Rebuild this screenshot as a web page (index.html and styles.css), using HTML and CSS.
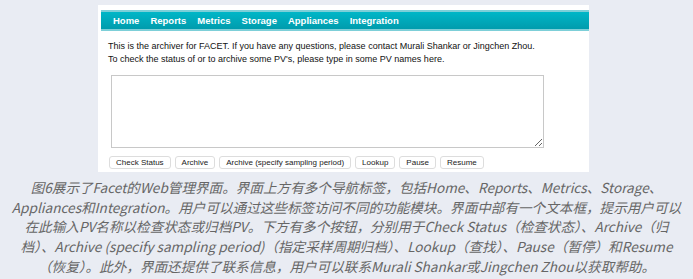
FILE: index.html
```html
<!DOCTYPE html>
<html lang="zh-CN">
<head>
    <meta charset="UTF-8">
    <title>Facet Archiver</title>
    <link rel="stylesheet" href="styles.css">
</head>
<body>

<div class="shot">
    <div class="nav">
        <a href="#">Home</a>
        <a href="#">Reports</a>
        <a href="#">Metrics</a>
        <a href="#">Storage</a>
        <a href="#">Appliances</a>
        <a href="#">Integration</a>
    </div>

    <div class="intro">
        <p>This is the archiver for FACET. If you have any questions, please contact Murali Shankar or Jingchen Zhou.</p>
        <p>To check the status of or to archive some PV's, please type in some PV names here.</p>
    </div>

    <textarea class="pvlist"></textarea>

    <div class="buttons">
        <button>Check Status</button>
        <button>Archive</button>
        <button>Archive (specify sampling period)</button>
        <button>Lookup</button>
        <button>Pause</button>
        <button>Resume</button>
    </div>
</div>

<p class="caption">
    图6展示了Facet的Web管理界面。界面上方有多个导航标签，包括Home、Reports、Metrics、Storage、<br>
    Appliances和Integration。用户可以通过这些标签访问不同的功能模块。界面中部有一个文本框，提示用户可以<br>
    在此输入PV名称以检查状态或归档PV。下方有多个按钮，分别用于Check Status（检查状态）、Archive（归<br>
    档）、Archive (specify sampling period)（指定采样周期归档）、Lookup（查找）、Pause（暂停）和Resume<br>
    （恢复）。此外，界面还提供了联系信息，用户可以联系Murali Shankar或Jingchen Zhou以获取帮助。
</p>

</body>
</html>
```

FILE: styles.css
```css
body {
    margin: 0;
    background-color: #e9ecf3;
    font-family: "Liberation Sans", Arial, sans-serif;
}
.shot {
    margin: 5px 0 0 98px;
    width: 491px;
    height: 167px;
    background-color: #fff;
    padding-top: 5px;
    box-sizing: border-box;
}
.nav {
    margin-left: 3px;
    height: 21px;
    display: flex;
    align-items: center;
    padding-left: 12px;
    gap: 11px;
    background: linear-gradient(#00b6c7, #009cad);
    border-top: 2px solid #7dcfd8;
    border-bottom: 2px solid #7dcfd8;
    box-sizing: border-box;
}
.nav a {
    color: #fff;
    font-weight: bold;
    font-size: 9.5px;
    text-decoration: none;
}
.intro {
    padding: 9px 0 0 10px;
    font-size: 9px;
    color: #111;
}
.intro p {
    margin: 0;
    line-height: 13px;
}
.pvlist {
    display: block;
    margin: 9px 0 0 13px;
    width: 433px;
    height: 73px;
    border: 1px solid #c8c8c8;
    box-sizing: border-box;
    resize: both;
}
.buttons {
    display: flex;
    gap: 4px;
    margin: 8px 0 0 11px;
}
.buttons button {
    height: 13px;
    padding: 0 6px;
    font-family: "Liberation Sans", Arial, sans-serif;
    font-size: 8px;
    color: #222;
    background-color: #fff;
    border: 1px solid #ddd;
    border-radius: 3px;
    line-height: 11px;
}
.caption {
    margin: 6px 0 0;
    text-align: center;
    font-family: "Noto Sans CJK SC", "Noto Sans", sans-serif;
    font-style: italic;
    font-size: 13.6px;
    line-height: 19.7px;
    color: #666;
}
```
